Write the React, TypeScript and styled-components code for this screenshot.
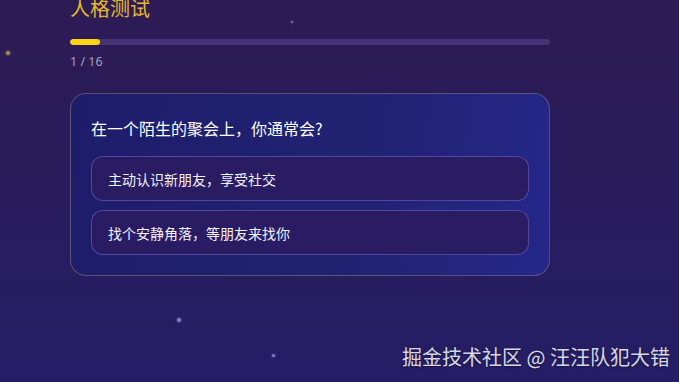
import React from "react";
import styled, { createGlobalStyle } from "styled-components";

const GlobalStyle = createGlobalStyle`
    html, body {
        margin: 0;
        padding: 0;
        height: 100%;
        overflow: hidden;
    }
    body {
        font-family: "Noto Sans CJK SC", "Noto Sans", sans-serif;
    }
`;

const Page = styled.div`
    position: relative;
    width: 100vw;
    height: 100vh;
    overflow: hidden;
    background: linear-gradient(180deg, #2d1b55 0%, #281c5c 50%, #251e66 100%);
`;

const Star = styled.span<{ $size: number; $color?: string }>`
    position: absolute;
    width: ${p => p.$size}px;
    height: ${p => p.$size}px;
    border-radius: 50%;
    background: ${p => p.$color || "rgba(170, 160, 240, 0.75)"};
    box-shadow: 0 0 3px ${p => p.$color || "rgba(170, 160, 240, 0.6)"};
`;

const Container = styled.main`
    position: relative;
    width: 480px;
    margin: 0 0 0 70px;
    display: flex;
    flex-direction: column;
`;

const Title = styled.h1`
    margin: -3px 0 0;
    font-size: 20px;
    line-height: 22px;
    font-weight: 400;
    color: #e6b82e;
`;

const ProgressTrack = styled.div`
    margin-top: 20px;
    height: 6px;
    border-radius: 3px;
    background: rgba(140, 120, 200, 0.28);
    overflow: hidden;
`;

const ProgressFill = styled.div`
    height: 100%;
    border-radius: 3px;
    background: #ffd414;
`;

const Counter = styled.div`
    margin-top: 9px;
    font-family: "Noto Sans", "Noto Sans CJK SC", sans-serif;
    font-size: 12.5px;
    line-height: 16px;
    color: #a6a1c2;
`;

const Card = styled.section`
    margin-top: 23px;
    padding: 20px;
    border-radius: 16px;
    border: 1px solid rgba(190, 160, 110, 0.38);
    background: linear-gradient(100deg, #1e1d6c 0%, #212272 60%, #25278a 100%);
`;

const Question = styled.h2`
    margin: 0 0 14px;
    font-size: 16px;
    line-height: 28px;
    font-weight: 400;
    color: #ffffff;
`;

const Options = styled.div`
    display: flex;
    flex-direction: column;
    gap: 9px;
`;

const Option = styled.button`
    display: flex;
    align-items: center;
    height: 45px;
    padding: 0 16px;
    border-radius: 12px;
    border: 1px solid rgba(125, 112, 215, 0.5);
    background: #291c62;
    color: #f4f2ff;
    font-family: "Noto Sans CJK SC", "Noto Sans", sans-serif;
    font-size: 14px;
    font-weight: 400;
    text-align: left;
    cursor: pointer;
`;

const Watermark = styled.div`
    position: absolute;
    right: 9px;
    bottom: 13px;
    font-size: 20px;
    line-height: 24px;
    color: rgba(235, 235, 242, 0.92);
    text-shadow: 0 1px 2px rgba(0, 0, 0, 0.35);
    white-space: nowrap;
`;

const stars = [
    { x: 6, y: 51, s: 4, c: "rgba(200, 170, 80, 0.8)" },
    { x: 291, y: 21, s: 2 },
    { x: 511, y: 111, s: 4 },
    { x: 380, y: 123, s: 2 },
    { x: 539, y: 142, s: 3, c: "rgba(120, 110, 200, 0.5)" },
    { x: 133, y: 208, s: 3 },
    { x: 360, y: 265, s: 3, c: "rgba(130, 120, 210, 0.6)" },
    { x: 177, y: 318, s: 4 },
    { x: 272, y: 354, s: 3 },
];

const options = ["主动认识新朋友，享受社交", "找个安静角落，等朋友来找你"];

export default function App() {
    const current = 1;
    const total = 16;

    return (
        <>
            <GlobalStyle />
            <Page>
                {stars.map((st, i) => (
                    <Star
                        key={i}
                        $size={st.s}
                        $color={st.c}
                        style={{ left: st.x, top: st.y }}
                    />
                ))}
                <Container>
                    <Title>人格测试</Title>
                    <ProgressTrack>
                        <ProgressFill style={{ width: `${(current / total) * 100}%` }} />
                    </ProgressTrack>
                    <Counter>{current} / {total}</Counter>
                    <Card>
                        <Question>在一个陌生的聚会上，你通常会?</Question>
                        <Options>
                            {options.map(o => (
                                <Option key={o}>{o}</Option>
                            ))}
                        </Options>
                    </Card>
                </Container>
                <Watermark>掘金技术社区 @ 汪汪队犯大错</Watermark>
            </Page>
        </>
    );
}
